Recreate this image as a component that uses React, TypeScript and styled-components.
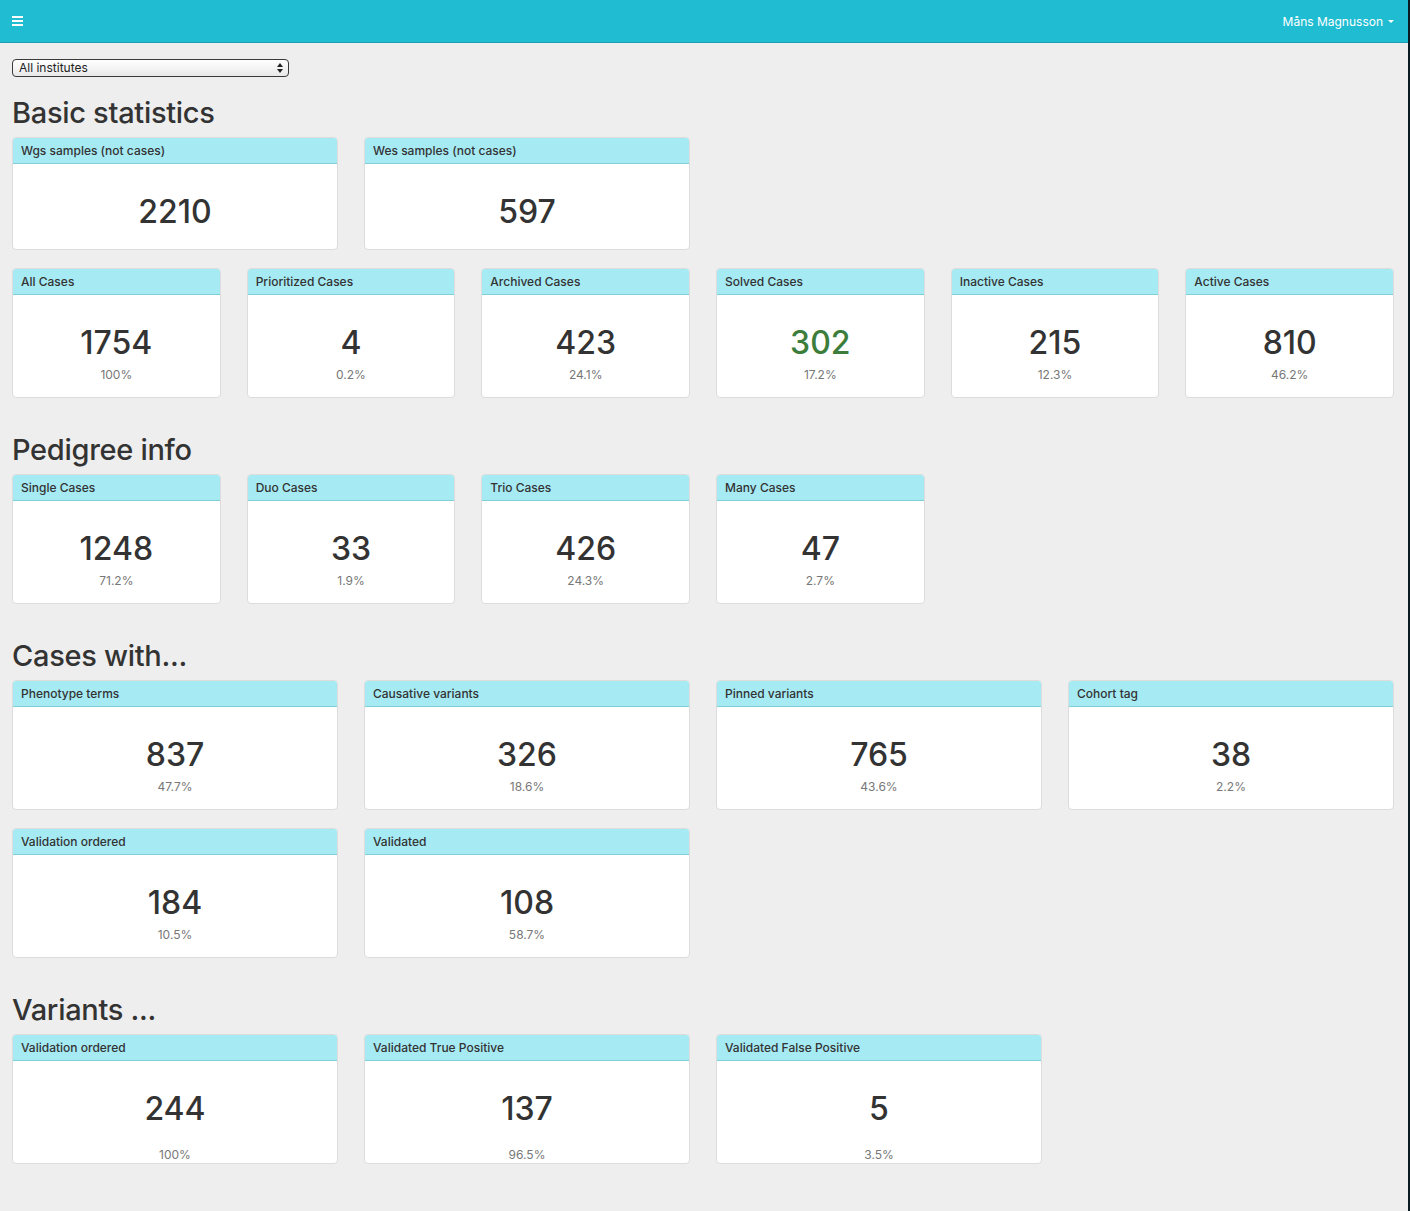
import React from 'react';
import styled, { createGlobalStyle } from 'styled-components';

const GlobalStyle = createGlobalStyle`
  html, body {
    margin: 0;
    padding: 0;
    background: #eeeeee;
  }
  body {
    font-family: Inter, "Helvetica Neue", "Liberation Sans", sans-serif;
    color: #333333;
  }
`;

interface Stat {
  title: string;
  value: number;
  percent?: string;
  color?: string;
}

const BASIC_WIDE: Stat[] = [
  { title: 'Wgs samples (not cases)', value: 2210 },
  { title: 'Wes samples (not cases)', value: 597 },
];

const BASIC_CASES: Stat[] = [
  { title: 'All Cases', value: 1754, percent: '100%' },
  { title: 'Prioritized Cases', value: 4, percent: '0.2%' },
  { title: 'Archived Cases', value: 423, percent: '24.1%' },
  { title: 'Solved Cases', value: 302, percent: '17.2%', color: '#3c7d3c' },
  { title: 'Inactive Cases', value: 215, percent: '12.3%' },
  { title: 'Active Cases', value: 810, percent: '46.2%' },
];

const PEDIGREE: Stat[] = [
  { title: 'Single Cases', value: 1248, percent: '71.2%' },
  { title: 'Duo Cases', value: 33, percent: '1.9%' },
  { title: 'Trio Cases', value: 426, percent: '24.3%' },
  { title: 'Many Cases', value: 47, percent: '2.7%' },
];

const CASES_WITH: Stat[] = [
  { title: 'Phenotype terms', value: 837, percent: '47.7%' },
  { title: 'Causative variants', value: 326, percent: '18.6%' },
  { title: 'Pinned variants', value: 765, percent: '43.6%' },
  { title: 'Cohort tag', value: 38, percent: '2.2%' },
  { title: 'Validation ordered', value: 184, percent: '10.5%' },
  { title: 'Validated', value: 108, percent: '58.7%' },
];

const VARIANTS: Stat[] = [
  { title: 'Validation ordered', value: 244, percent: '100%' },
  { title: 'Validated True Positive', value: 137, percent: '96.5%' },
  { title: 'Validated False Positive', value: 5, percent: '3.5%' },
];

const Page = styled.div`
  min-height: 1211px;
  border-right: 2px solid #0b1b22;
  box-sizing: border-box;
`;

const Navbar = styled.nav`
  height: 42px;
  background: #1fbcd2;
  border-bottom: 1px solid #1a9fb2;
  display: flex;
  align-items: center;
  justify-content: space-between;
  padding: 0 14px 0 12px;
`;

const MenuButton = styled.button`
  border: none;
  background: transparent;
  padding: 0;
  width: 11px;
  height: 10px;
  display: flex;
  flex-direction: column;
  justify-content: space-between;
  cursor: pointer;

  span {
    display: block;
    height: 2px;
    background: #ffffff;
  }
`;

const UserMenu = styled.div`
  color: #ffffff;
  font-size: 12px;
  display: flex;
  align-items: center;
  gap: 5px;
`;

const Caret = styled.span`
  width: 0;
  height: 0;
  border-left: 3px solid transparent;
  border-right: 3px solid transparent;
  border-top: 3px solid #ffffff;
`;

const Content = styled.main`
  padding: 16px 14px 40px 12px;
`;

const SelectBox = styled.div`
  width: 277px;
  height: 18px;
  box-sizing: border-box;
  border: 1px solid #3a3a3a;
  border-radius: 4px;
  background: linear-gradient(#ffffff, #e9e9e9);
  display: flex;
  align-items: center;
  justify-content: space-between;
  padding: 0 5px 0 6px;
  font-size: 12px;
  line-height: 14px;
  color: #222222;
`;

const Arrows = styled.svg`
  width: 6px;
  height: 10px;
`;

const SectionTitle = styled.h2<{ first?: boolean }>`
  font-size: 29px;
  font-weight: 500;
  line-height: 36px;
  margin: ${(p) => (p.first ? '18px' : '34px')} 0 6px;
  letter-spacing: -0.3px;
  color: #333333;
`;

const Grid = styled.div<{ cols: number }>`
  display: grid;
  grid-template-columns: repeat(${(p) => p.cols}, 1fr);
  column-gap: 26px;
  row-gap: 18px;
  & + & {
    margin-top: 18px;
  }
`;

const Card = styled.div`
  background: #ffffff;
  border: 1px solid #dcdcdc;
  border-radius: 4px;
  overflow: hidden;
`;

const CardHeader = styled.div`
  height: 25px;
  background: #a6eaf3;
  border-bottom: 1px solid #7fcfd9;
  padding: 0 8px;
  display: flex;
  align-items: center;
  font-size: 12px;
  font-weight: 500;
  color: #333333;
`;

const CardBody = styled.div<{ tail?: boolean }>`
  padding: 29px 0 ${(p) => (p.tail ? '0' : '14px')};
  text-align: center;
`;

const Value = styled.div<{ color?: string; tail?: boolean }>`
  font-size: 32px;
  font-weight: 500;
  line-height: 37px;
  margin-bottom: ${(p) => (p.tail ? '19px' : '5px')};
  color: ${(p) => p.color || '#333333'};
`;

const Percent = styled.div`
  font-size: 12px;
  line-height: 17px;
  color: #777777;
`;

const StatCard: React.FC<{ stat: Stat; tail?: boolean }> = ({ stat, tail }) => (
  <Card>
    <CardHeader>{stat.title}</CardHeader>
    <CardBody tail={tail}>
      <Value color={stat.color} tail={tail}>
        {stat.value}
      </Value>
      {stat.percent && <Percent>{stat.percent}</Percent>}
    </CardBody>
  </Card>
);

export default function App() {
  return (
    <Page>
      <GlobalStyle />
      <Navbar>
        <MenuButton aria-label='menu'>
          <span />
          <span />
          <span />
        </MenuButton>
        <UserMenu>
          Måns Magnusson
          <Caret />
        </UserMenu>
      </Navbar>
      <Content>
        <SelectBox>
          All institutes
          <Arrows viewBox='0 0 6 10'>
            <path d='M3 0 L6 4 H0 Z' fill='#222' />
            <path d='M3 10 L6 6 H0 Z' fill='#222' />
          </Arrows>
        </SelectBox>

        <SectionTitle first>Basic statistics</SectionTitle>
        <Grid cols={4}>
          {BASIC_WIDE.map((s) => (
            <StatCard key={s.title} stat={s} />
          ))}
        </Grid>
        <Grid cols={6}>
          {BASIC_CASES.map((s) => (
            <StatCard key={s.title} stat={s} />
          ))}
        </Grid>

        <SectionTitle>Pedigree info</SectionTitle>
        <Grid cols={6}>
          {PEDIGREE.map((s) => (
            <StatCard key={s.title} stat={s} />
          ))}
        </Grid>

        <SectionTitle>Cases with...</SectionTitle>
        <Grid cols={4}>
          {CASES_WITH.map((s) => (
            <StatCard key={s.title} stat={s} />
          ))}
        </Grid>

        <SectionTitle>Variants ...</SectionTitle>
        <Grid cols={4}>
          {VARIANTS.map((s) => (
            <StatCard key={s.title} stat={s} tail />
          ))}
        </Grid>
      </Content>
    </Page>
  );
}
